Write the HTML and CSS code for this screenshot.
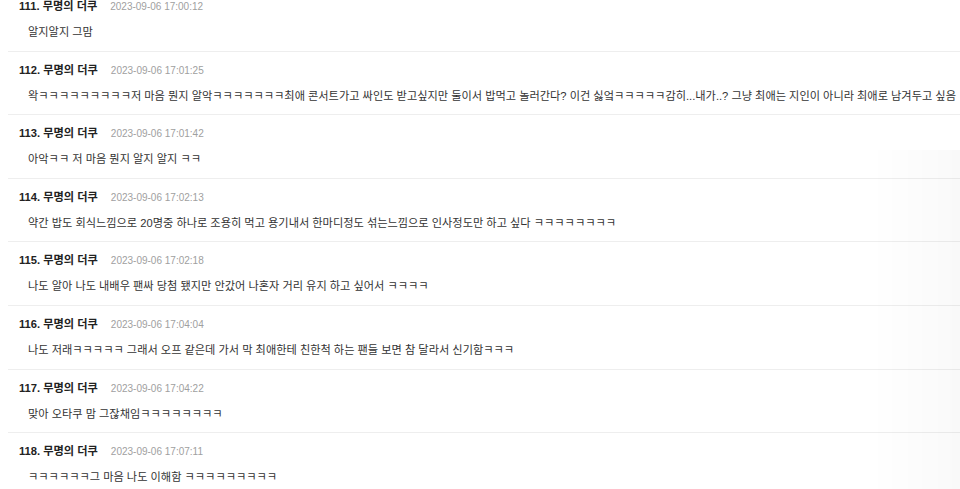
FILE: index.html
```html
<!DOCTYPE html>
<html lang="ko">
<head>
<meta charset="utf-8">
<title>댓글</title>
<link rel="stylesheet" href="styles.css">
</head>
<body>
<div class="page">
  <ul class="comments">
    <li class="comment">
      <div class="meta"><span class="author">111. 무명의 더쿠</span><span class="date">2023-09-06 17:00:12</span></div>
      <p class="text">알지알지 그맘</p>
    </li>
    <li class="comment">
      <div class="meta"><span class="author">112. 무명의 더쿠</span><span class="date">2023-09-06 17:01:25</span></div>
      <p class="text">왁ㅋㅋㅋㅋㅋㅋㅋㅋㅋ저 마음 뭔지 알악ㅋㅋㅋㅋㅋㅋㅋ최애 콘서트가고 싸인도 받고싶지만 둘이서 밥먹고 놀러간다? 이건 싫엌ㅋㅋㅋㅋㅋ감히...내가..? 그냥 최애는 지인이 아니라 최애로 남겨두고 싶음</p>
    </li>
    <li class="comment">
      <div class="meta"><span class="author">113. 무명의 더쿠</span><span class="date">2023-09-06 17:01:42</span></div>
      <p class="text">아악ㅋㅋ 저 마음 뭔지 알지 알지 ㅋㅋ</p>
    </li>
    <li class="comment">
      <div class="meta"><span class="author">114. 무명의 더쿠</span><span class="date">2023-09-06 17:02:13</span></div>
      <p class="text">약간 밥도 회식느낌으로 20명중 하나로 조용히 먹고 용기내서 한마디정도 섞는느낌으로 인사정도만 하고 싶다 ㅋㅋㅋㅋㅋㅋㅋㅋ</p>
    </li>
    <li class="comment">
      <div class="meta"><span class="author">115. 무명의 더쿠</span><span class="date">2023-09-06 17:02:18</span></div>
      <p class="text">나도 알아 나도 내배우 팬싸 당첨 됐지만 안갔어 나혼자 거리 유지 하고 싶어서 ㅋㅋㅋㅋ</p>
    </li>
    <li class="comment">
      <div class="meta"><span class="author">116. 무명의 더쿠</span><span class="date">2023-09-06 17:04:04</span></div>
      <p class="text">나도 저래ㅋㅋㅋㅋㅋ 그래서 오프 같은데 가서 막 최애한테 친한척 하는 팬들 보면 참 달라서 신기함ㅋㅋㅋ</p>
    </li>
    <li class="comment">
      <div class="meta"><span class="author">117. 무명의 더쿠</span><span class="date">2023-09-06 17:04:22</span></div>
      <p class="text">맞아 오타쿠 맘 그잖채임ㅋㅋㅋㅋㅋㅋㅋㅋ</p>
    </li>
    <li class="comment">
      <div class="meta"><span class="author">118. 무명의 더쿠</span><span class="date">2023-09-06 17:07:11</span></div>
      <p class="text">ㅋㅋㅋㅋㅋㅋ그 마음 나도 이해함 ㅋㅋㅋㅋㅋㅋㅋㅋㅋ</p>
    </li>
  </ul>
</div>
<div class="edge-shade"></div>
</body>
</html>
```

FILE: styles.css
```css
html, body {
  margin: 0;
  padding: 0;
  background: #ffffff;
}

body {
  font-family: "Liberation Sans", "Noto Sans CJK KR", sans-serif;
  overflow: hidden;
  height: 489px;
}

.page {
  padding-left: 8px;
  margin-top: -13px;
}

.comments {
  list-style: none;
  margin: 0;
  padding: 0;
}

.comment {
  border-top: 1px solid #eeeeee;
  padding: 10px 0 9.6px 11px;
}

.meta {
  display: flex;
  align-items: baseline;
  gap: 13px;
  height: 17px;
  line-height: 17px;
}

.author {
  font-size: 11.2px;
  font-weight: bold;
  color: #222222;
}

.date {
  font-size: 10px;
  color: #a0a0a0;
}

.text {
  margin: 9px 0 0 9px;
  font-size: 11.2px;
  line-height: 17px;
  height: 17px;
  color: #333333;
  white-space: nowrap;
}

.edge-shade {
  position: fixed;
  top: 150px;
  right: 0;
  width: 90px;
  bottom: 0;
  background: linear-gradient(to right, rgba(0,0,0,0), rgba(0,0,0,0.025));
  pointer-events: none;
}
```
